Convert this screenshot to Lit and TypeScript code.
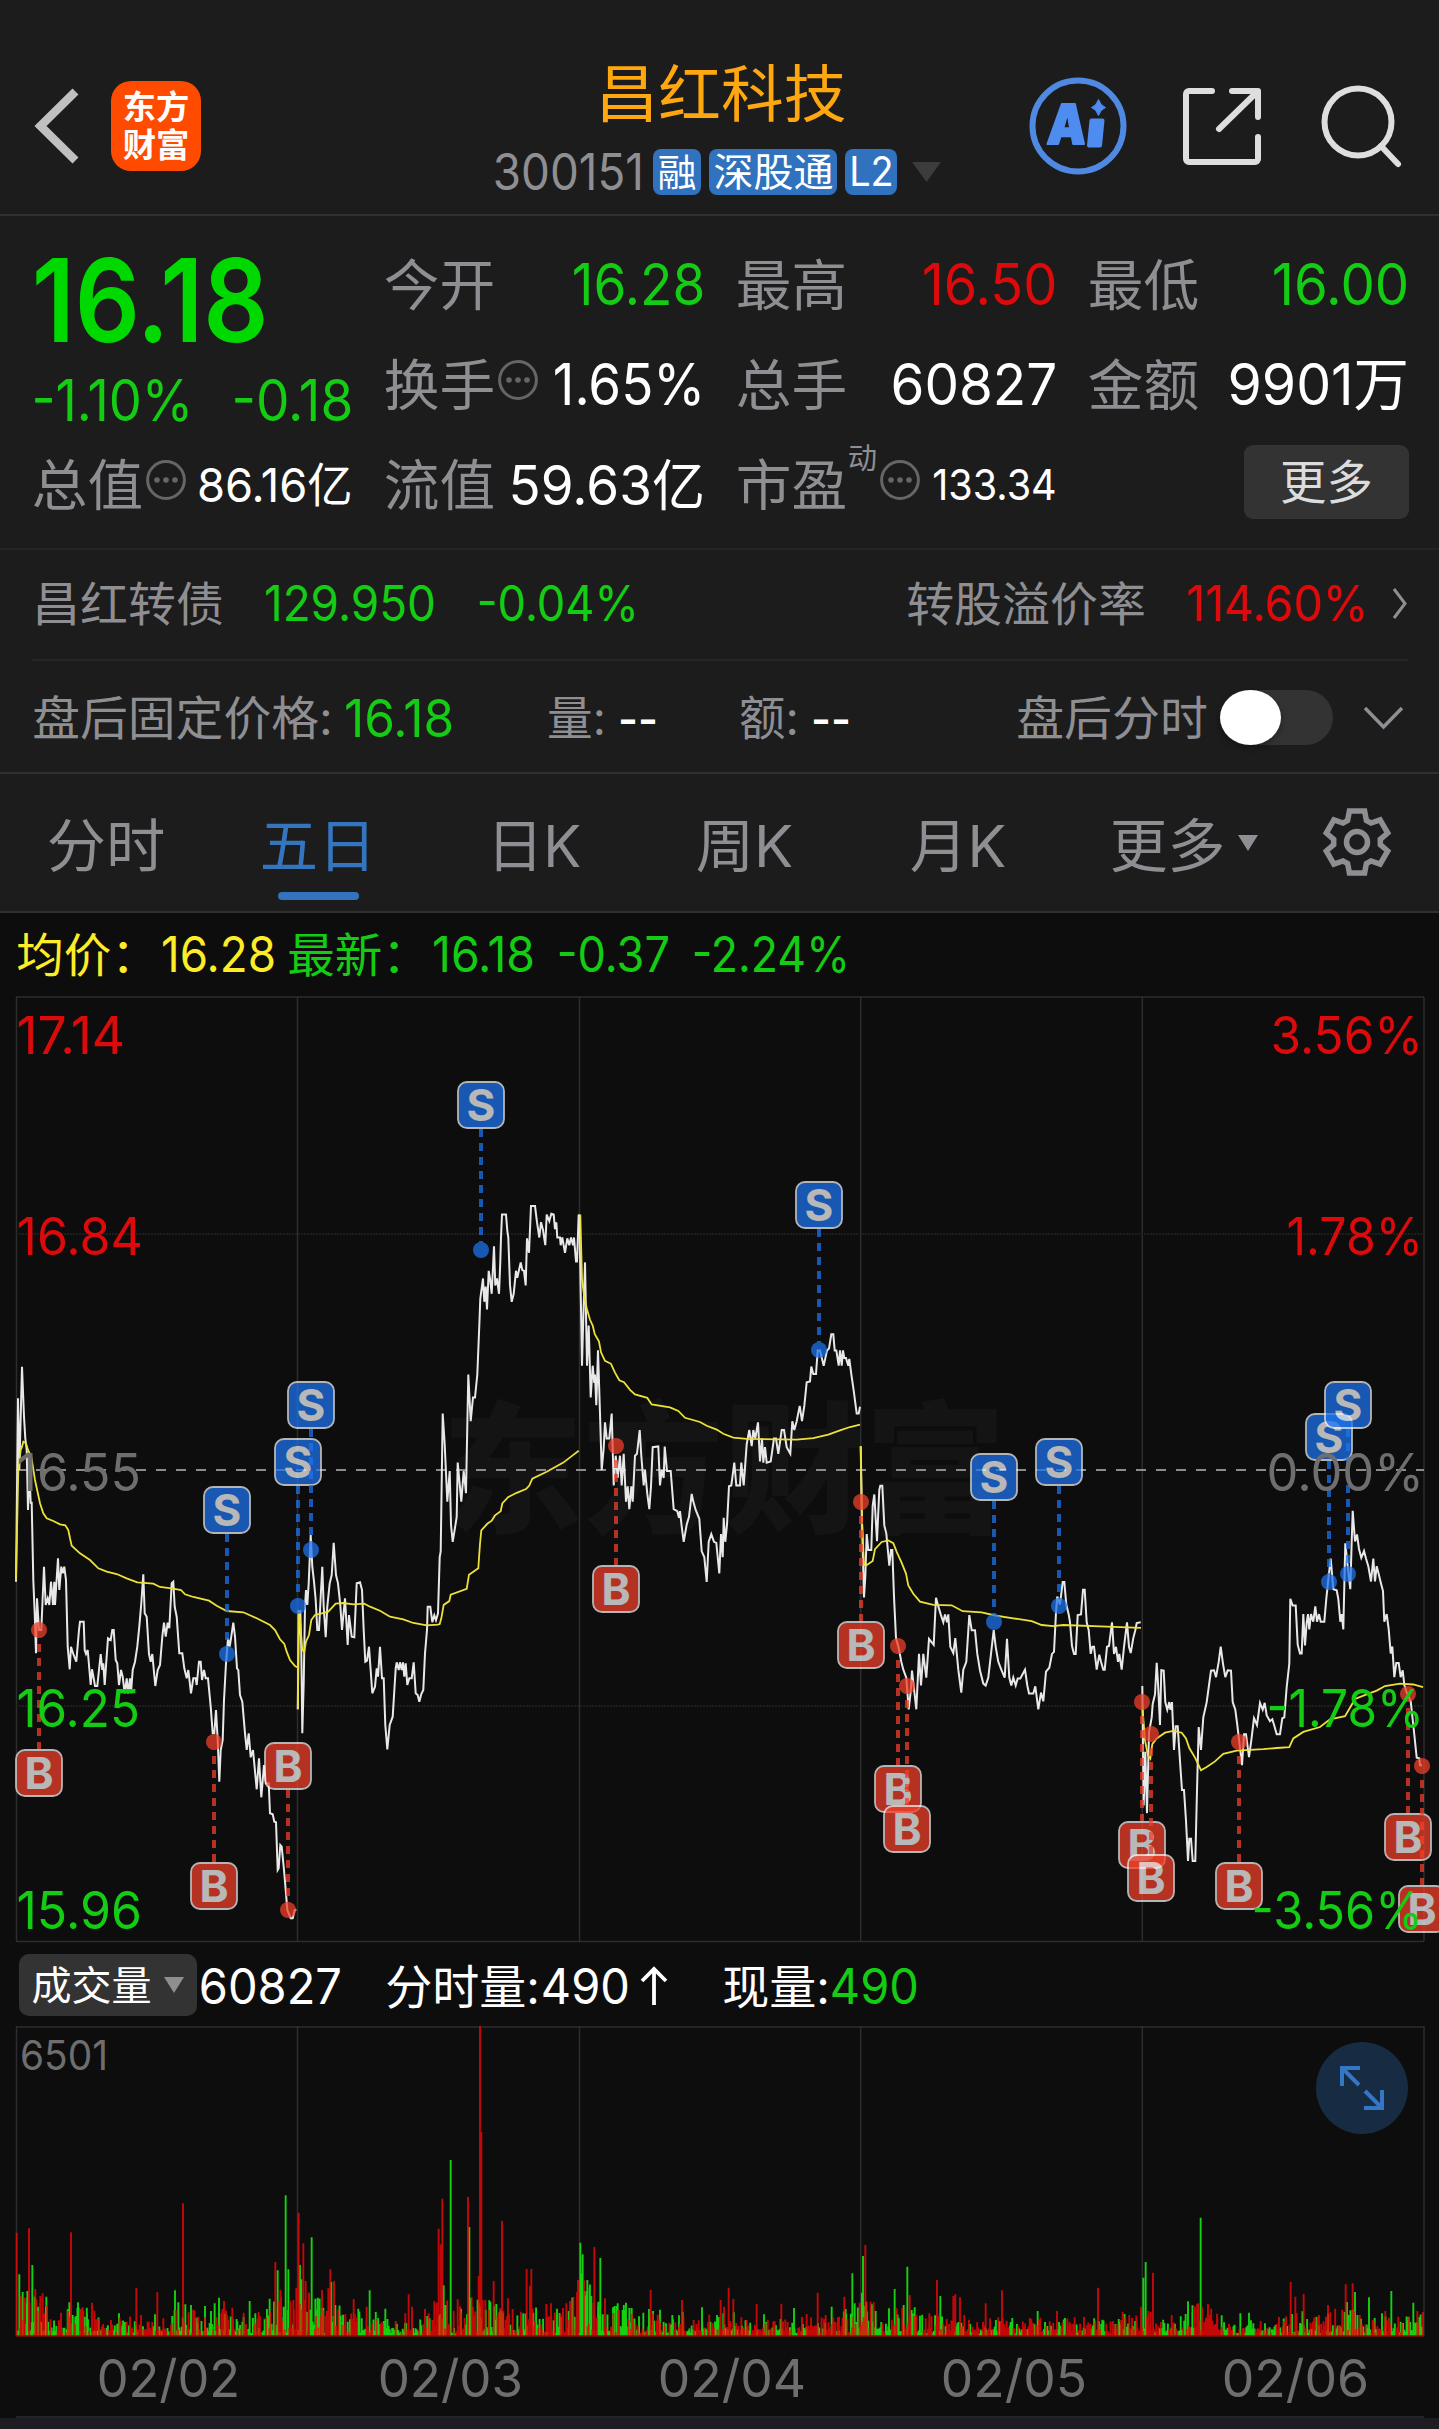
import { LitElement, html, svg, css } from "lit";
import { customElement, property } from "lit/decorators.js";

type Pt = [number, number];

/** Turns "x,y x,y ..." digitised in a local frame into chart coordinates. */
interface Frame { ox: number; oy: number; sx: number; sy: number; }
const A: Frame = { ox: 0, oy: 1450, sx: 3, sy: 3 };
const B: Frame = { ox: 400, oy: 1050, sx: 3, sy: 2.613 };
const C: Frame = { ox: 840, oy: 1300, sx: 3, sy: 2.529 };
const D: Frame = { ox: 1120, oy: 1350, sx: 3, sy: 2.613 };
const TOP = 996;

const trace = (f: Frame, src: string): Pt[] =>
  src.trim().split(/\s+/).map((p) => {
    const [x, y] = p.split(",").map(Number);
    return [f.ox + x / f.sx, f.oy + y / f.sy - TOP] as Pt;
  });
const points = (pts: Pt[]) => pts.map(([x, y]) => `${x.toFixed(1)},${y.toFixed(1)}`).join(" ");

const PRICE: Pt[][] = [
  trace(A, `48,395 54,-155 58,60 66,-250 72,-100 76,-35 80,0 84,180 88,60 92,158 95,158 100,390 104,490 108,610 111,445 117,540 124,540 132,350 137,465 143,445 148,465 153,395 157,440 159,465 163,395 165,465 174,325 178,420 184,350 188,370 193,350 198,390 203,590 209,658 213,590 220,612 229,635 237,540 240,515 251,515 254,600 258,612 263,600 272,705 276,658 282,690 285,708 292,708 302,612 307,660 310,640 314,705 319,635 324,565 332,570 337,540 341,540 347,630 352,640 357,705 363,660 368,680 374,730 380,685 384,730 390,685 393,730 398,660 405,635 412,590 418,530 424,460 430,373 434,490 440,500 447,612 452,635 457,612 466,708 473,660 480,645 487,560 492,518 497,560 503,518 508,535 515,400 520,395 524,470 530,500 538,610 547,610 553,655 560,685 565,660 573,730 580,685 587,685 590,705 597,635 602,635 606,690 612,660 617,685 624,685 632,770 638,850 643,850 648,780 653,870 658,995 662,900 668,870 672,750 678,640 684,565 689,590 693,565 700,518 705,560 711,655 715,660 720,735 727,755 735,850 740,900 746,850 752,922 759,900 770,1018 777,925 784,1042 792,945 798,1000 806,1000 810,1090 818,1093 823,1115 828,1117 833,1260 836,1255 841,1185 845,1190 852,1260 858,1330 862,1380 872,1405 878,1405 884,1380 889,1380`),
  [
    ...trace(A, `893,778 896,560 901,480 904,600 907,850 911,700 915,470 918,420 922,465 926,400 932,255 937,350 942,395 947,450 952,540 957,540 962,440 967,350 971,470 977,562 982,470 989,400 995,375 1001,278 1008,375 1014,400 1021,465 1026,540 1035,445 1043,585 1047,495 1055,560 1063,562 1070,400 1080,397 1086,420 1091,540 1096,635 1101,632 1107,590 1117,730 1125,710 1130,655 1134,680 1140,590 1146,685 1151,685 1156,825 1162,898 1169,825 1178,800 1187,655 1190,637 1196,660 1200,637 1205,660 1209,637 1213,680 1217,640 1222,705 1228,685 1235,685 1241,637 1247,730 1253,735 1258,755 1264,732 1270,720 1275,610 1281,540`),
    ...trace(B, `83,1455 91,1455 97,1495 103,1477 108,1490 114,1472 119,1325 122,1310 128,950 134,1030 142,1180 149,1100 153,1240 158,1285 163,1260 170,1220 173,1078 184,1180 191,1100 198,1158 205,848 212,970 219,908 225,908 232,848 238,720 241,650 249,597 253,658 257,618 261,678 266,577 270,597 275,637 282,513 286,615 291,597 297,637 301,553 303,490 306,430 318,430 322,472 325,490 330,615 335,658 341,637 348,577 352,595 362,555 367,575 372,577 377,615 381,492 387,530 393,408 405,408 411,450 418,490 423,450 429,470 436,510 440,430 448,447 454,428 461,430 465,468 469,450 472,490 480,490 482,510 487,490 495,530 502,492 508,510 513,490 519,510 522,490 528,553 531,553 536,430`),
  ],
  trace(B, `537,430 541,570 546,825 550,700 555,555 561,825 566,720 572,908 578,825 583,870 585,848 589,928 594,785 600,950 605,1098 611,1040 615,973 620,1015 628,1015 635,950 641,1138 647,1060 653,1118 660,1060 665,1138 671,1055 678,1180 683,1140 688,1200 694,1140 698,1180 705,1060 711,1055 719,993 724,1060 731,1138 735,1098 742,1160 748,1200 753,1140 758,1038 775,1036 780,1138 785,1098 791,1118 794,1036 801,1100 812,1100 821,1200 832,1205 837,1222 840,1205 845,1245 851,1285 860,1240 867,1220 875,1160 880,1180 887,1202 898,1225 905,1310 913,1325 920,1390 926,1285 934,1265 942,1285 949,1288 958,1368 963,1265 968,1325 971,1222 976,1285 981,1240 987,1140 994,1138 1003,1078 1009,1138 1020,1138 1024,1078 1031,1138 1040,1030 1048,993 1055,1035 1060,993 1066,1015 1074,973 1080,1075 1086,1015 1090,1078 1095,1038 1100,1078 1112,1075 1122,1015 1128,1015 1135,1055 1145,993 1152,993 1160,1038 1171,1055 1177,970 1183,993 1190,970 1199,930 1206,970 1213,930 1220,868 1230,866 1234,827 1240,847 1248,847 1253,785 1260,785 1271,825 1281,785 1287,780 1294,743 1300,743 1304,785 1309,785 1316,825 1320,785 1325,825 1329,785 1333,805 1338,805 1345,825 1348,807 1354,847 1361,890 1370,950 1376,950 1380,932`),
  trace(C, `62,370 66,560 72,752 76,700 80,592 85,632 94,632 98,520 103,492 111,610 118,480 121,470 127,470 133,570 139,590 148,672 153,632 157,632 162,750 168,855 176,880 184,915 190,935 199,955 206,1035 212,990 216,937 223,990 229,1035 237,895 243,975 250,895 259,955 267,857 281,872 288,753 295,775 302,795 310,815 315,795 321,815 325,795 331,877 340,893 346,855 355,935 364,993 370,935 379,915 388,797 395,835 405,835 412,895 420,937 430,970 437,975 445,955 453,895 461,835 467,877 475,915 484,935 494,955 501,857 508,955 514,975 520,955 527,975 533,957 541,957 555,935 562,975 567,995 580,995 586,977 595,1035 603,993 610,1015 618,940 628,930 636,895 642,890 648,790 652,750 660,770 668,713 673,713 679,770 686,795 690,815 696,875 702,895 707,895 713,797 723,795 729,733 734,733 740,815 746,835 752,895 757,877 762,877 770,935 778,897 783,915 790,935 794,935 801,877 807,875 816,815 822,895 828,877 834,915 838,895 845,935 852,877 861,815 867,877 872,893 880,855 886,835 890,817 902,815`),
  trace(D, `67,878 71,1190 76,1050 81,1210 87,1000 95,960 98,925 105,900 110,817 114,870 120,980 124,837 131,838 136,920 142,940 148,920 151,940 156,920 162,1045 167,983 173,983 180,1075 186,1150 192,1150 198,1230 204,1335 208,1277 213,1277 218,1335 226,1335 231,1150 236,985 243,1045 250,960 260,920 268,870 273,838 282,837 288,855 296,815 302,775 309,820 316,855 323,837 333,838 338,920 346,940 352,980 360,1040 366,1085 372,1004 378,1004 387,1064 394,1020 402,962 411,980 420,922 428,940 434,922 440,955 450,970 457,965 463,982 470,1004 480,1004 487,962 493,960 500,880 508,820 511,650 518,668 527,668 533,770 540,793 545,793 550,690 555,772 560,712 564,690 568,730 573,690 580,710 586,670 591,710 597,690 602,710 613,710 619,650 626,590 632,545 640,625 650,628 655,650 661,710 665,690 670,730 676,505 683,565 691,625 695,500 698,420 705,500 711,482 717,520 724,543 732,525 738,545 745,565 753,605 760,545 765,605 770,565 776,585 783,610 789,630 793,710 800,690 806,730 812,793 817,775 823,855 829,818 836,818 842,855 848,837 853,875 860,895 872,918 880,980 890,1065 898,1067 900,1085 906,1085`),
];

const AVERAGE: Pt[][] = [
  trace(A, `48,390 55,60 62,0 66,-10 70,-25 78,-20 84,0 94,20 105,90 120,160 130,190 140,205 160,213 180,223 196,226 205,240 210,265 215,287 240,310 270,330 295,355 320,365 350,372 380,385 412,397 460,401 480,411 520,416 543,420 555,433 580,441 627,452 650,467 680,483 730,487 770,505 810,525 825,540 840,568 853,582 860,605 870,630 885,648 892,652`),
  [
    ...trace(A, `894,778 895,480 900,510 907,600 913,605 918,575 927,555 934,510 945,495 965,490 985,485 1007,461 1030,459 1060,463 1093,461 1110,470 1140,482 1170,500 1210,508 1240,519 1280,526 1313,524`),
    ...trace(B, `119,1500 124,1485 131,1450 148,1440 152,1423 200,1408 207,1371 235,1354 240,1290 244,1255 262,1238 275,1230 285,1216 302,1205 307,1185 325,1168 350,1157 378,1147 388,1138 397,1120 440,1102 490,1078 520,1058 536,1047`),
  ],
  trace(B, `541,430 546,600 552,640 560,675 570,705 578,720 584,742 597,762 603,790 615,812 633,820 645,843 658,863 672,868 690,888 705,900 742,909 755,926 810,934 835,943 855,961 900,972 920,982 950,992 970,1003 1000,1013 1040,1016 1190,1018 1240,1014 1285,1005 1320,994 1350,985 1380,979`),
  trace(C, `62,370 66,560 72,670 77,672 98,660 105,630 125,612 145,608 160,615 170,637 185,665 198,692 205,722 220,743 240,763 280,771 335,772 368,787 425,790 465,798 520,805 575,812 605,822 640,825 670,822 800,826 903,829`),
  trace(D, `67,930 75,1020 84,1060 91,1068 97,1030 110,1015 135,1000 160,995 185,1000 198,1015 208,1040 225,1065 243,1098 260,1090 285,1075 310,1055 350,1047 430,1043 470,1040 508,1038 520,1015 550,998 600,985 630,965 675,957 690,935 705,912 740,900 770,890 795,878 840,872 880,874 909,881`),
];

/** Trades: side, x, badge centre y, price point y. */
const TRADES: ["B" | "S", number, number, number][] = [
  ["B", 39, 1773, 1630], ["B", 214, 1886, 1742], ["S", 227, 1510, 1654], ["B", 288, 1766, 1910],
  ["S", 298, 1462, 1606], ["S", 311, 1405, 1550], ["S", 481, 1105, 1250], ["B", 616, 1589, 1446],
  ["S", 819, 1205, 1350], ["B", 861, 1645, 1502], ["B", 898, 1789, 1646], ["B", 907, 1829, 1686],
  ["S", 994, 1477, 1622], ["S", 1059, 1462, 1606], ["B", 1142, 1845, 1702], ["B", 1151, 1878, 1734],
  ["B", 1239, 1886, 1742], ["S", 1329, 1437, 1582], ["S", 1348, 1405, 1574], ["B", 1408, 1837, 1694],
  ["B", 1422, 1909, 1766],
];

/** Volume peaks: x and top in third-pixels from the strip's origin, r = up, g = down. */
const PEAKS: [number, string][] = [
  [0, `50,908,r 58,1033,g 62,1098,r 68,1086,g 80,1120,g 82,1083,g 87,895,r 97,1005,g 104,1100,g 109,1108,r 114,1130,g 121,1098,r 128,1090,r 133,1150,r 139,1100,g 203,1138,g 208,1117,g 213,907,r 226,1160,g 234,1117,g 240,1148,r 248,1132,r 254,1160,g 261,1150,g 276,1118,r 283,1142,r 297,1167,r 333,1170,r 357,1150,g 375,1176,g 409,1073,r 423,1155,r 465,1153,g 472,1087,r 490,1165,r 515,1180,r 525,1081,g 535,1117,g 549,820,r 556,1123,g 573,1125,g 595,1160,r 615,1128,g 633,1143,g 644,1120,g 657,1103,g 672,1113,r 679,1156,r 697,1133,r 712,1174,g 731,1148,r 749,1113,g 766,1150,g 776,1146,r 798,1162,r 809,1106,g 822,1143,g 826,996,r 833,1021,g 841,1080,r 851,1130,g 857,796,g 865,1018,g 880,1110,r 889,1073,r 896,848,r 900,1005,g 904,1048,g 910,940,r 917,1053,r 927,1088,r 935,922,g 946,1106,g 953,1103,g 966,1080,r 970,1133,g 985,1075,r 991,1018,r 994,1056,g 1002,1053,r 1006,1125,g 1026,1178,g 1036,1153,r 1061,1107,r 1075,1136,g 1100,1130,r 1109,1081,g 1130,1167,r 1156,1136,g 1216,1150,r 1226,1093,r 1236,1130,r 1275,1137,r 1286,1150,r 1297,1170,r 1316,896,r 1323,943,r 1327,806,r 1331,1066,g 1337,1125,g 1352,690,g 1361,1143,r 1373,1108,r 1383,1136,g 1404,801,r 1408,891,g 1415,1102,r 1436,1038,r 1440,288,r 1444,606,r 1448,1110,r`],
  [1440, `16,1110,r 27,1140,r 41,1053,r 60,1135,r 66,873,r 69,1148,g 84,1105,r 98,1137,r 123,1156,r 140,1017,r 150,1067,r 154,1017,r 160,1148,g 199,1122,r 213,1120,r 231,1136,g 242,1153,r 259,1120,r 266,1143,g 280,1101,r 294,1050,r 301,938,g 305,1030,g 308,973,g 312,1050,r 318,1110,g 322,1050,g 329,1075,g 334,1098,g 343,951,r 355,1115,g 361,984,g 375,1105,r 399,1132,g 404,1128,g 413,1120,g 417,1140,r 433,1140,g 438,1118,g 448,1134,g 455,1134,g 490,1148,g 507,1137,g 512,1080,r 519,1152,r 540,1139,g 577,1155,g 597,1156,g 606,1110,r 608,1145,g 641,1170,r 666,1132,g 711,1155,g 722,1110,r 732,1130,r 746,1073,r 760,1107,r 784,1162,r 800,1170,r 830,1122,r 852,1153,g 858,1176,g 880,1174,r 904,1121,r 942,1134,g 966,1160,r 980,1152,r 1013,1088,r 1037,1155,r 1055,1130,g 1077,1160,r 1093,1100,r 1097,1137,g 1117,1030,g 1124,1120,g 1139,1118,r 1146,1088,g 1149,978,g 1156,945,r 1160,1115,r 1181,1117,r 1187,1143,g 1227,1135,g 1244,1077,g 1250,1135,r 1271,1125,g 1282,1010,g 1289,1095,r 1304,1132,g 1320,1157,g 1348,1150,r 1371,1050,r`],
  [2820, `1,1098,g 40,1098,r 46,1093,r 60,1102,r 64,1178,g 137,1120,r 186,1081,r 200,1172,r 212,1176,g 274,1167,r 293,1143,g 297,1170,r 351,1143,r 368,1178,r 404,1162,r 432,1161,r 474,1073,r 499,1181,r 526,1182,g 537,1176,g 548,1145,r 556,1160,r 576,1164,r 590,1165,r 603,1130,r 610,1043,g 617,996,g 625,1143,r 632,1145,r 639,1028,r 663,1176,r 695,1155,r 737,1152,g 744,1114,g 757,1147,g 775,1120,r 782,863,g 786,1130,r 798,1163,r 804,1122,r 832,1165,r 845,1156,g 867,1181,r 901,1150,g 927,1148,g 962,1173,r 975,1180,g 1017,1161,r 1032,1173,r 1052,1056,r 1056,1152,g 1066,1100,r 1091,1092,r 1129,1176,g 1137,1155,r 1158,1160,r 1164,1125,r 1171,1147,r 1200,1187,g 1217,1063,r 1221,1116,g 1225,1155,g 1238,1060,r 1245,1086,g 1287,1102,g 1304,1164,g 1326,1150,g 1336,1143,r 1354,1083,g 1382,1175,g 1406,1160,g 1420,1118,g 1432,1143,r 1449,1146,r`],
];

interface Bar { x: number; h: number; up: boolean; }

const buildVolume = (): Bar[] => {
  const peaks: Bar[] = [];
  for (const [off, src] of PEAKS)
    for (const p of src.split(" ")) {
      const [x, y, c] = p.split(",");
      peaks.push({ x: (off + Number(x)) / 3, h: (1218 - Number(y)) / 3, up: c === "r" });
    }
  let seed = 20240206;
  const rnd = () => ((seed = (seed * 1103515245 + 12345) % 2147483648) / 2147483648);
  const bars: Bar[] = [];
  let up = true;
  for (let x = 16.6; x < 1423; x += 1.17) {
    // Quiet minutes follow the level of the trading around them.
    const near = peaks.reduce((s, p) => s + (Math.abs(p.x - x) < 12 ? Math.min(p.h, 40) : 0), 0);
    if (rnd() < 0.4) up = !up;
    const red = x > 1194 && x < 1222 ? true : up;
    const r = rnd();
    bars.push({ x, h: 2.5 + r * r * (8 + near * 0.095) + rnd() * 4, up: red });
  }
  return [...bars, ...peaks];
};
const VOLUME = buildVolume();
const bars = (up: boolean) =>
  VOLUME.filter((b) => b.up === up).map((b) => `M${b.x.toFixed(2)} 310V${(310 - b.h).toFixed(1)}`).join("");

/** Real text set to a given ink width, optically centred on its box. */
const fit = (text: string, width: number, size: number, cls: string, left: number, right: number) => html`
  <svg class="tx ${cls}" width=${width} height=${size} viewBox="0 0 ${width} ${size}">
    <text x=${-left * size} y=${size * 0.865} font-size=${size}
      textLength=${width + (left + right) * size} lengthAdjust="spacingAndGlyphs">${text}</text>
  </svg>`;
const label = (text: string, width: number, size: number, cls = "") =>
  fit(text, width, size, cls, text[0] === "1" ? 0.02 : 0.045, /[亿万]$/.test(text) ? 0.035 : 0.04);
const cjk = (text: string, width: number, size: number, cls = "grey") => fit(text, width, size, cls, 0.04, 0.04);

const more = html`<svg class="info" width="40" height="40" viewBox="0 0 40 40">
  <circle cx="20" cy="20" r="18.4" fill="none" stroke="#666" stroke-width="3" />
  <g fill="#666"><circle cx="11" cy="20" r="2.8" /><circle cx="20" cy="20" r="2.8" /><circle cx="29" cy="20" r="2.8" /></g>
</svg>`;

const shared = css`
  :host {
    display: block;
    font-family: Inter, "Noto Sans CJK SC", sans-serif;
  }
  svg { display: block; flex: none; overflow: visible; }
  .tx text, text { font-family: Inter, "Noto Sans CJK SC", sans-serif; }
  .grey { fill: #8e8e93; }
  .green { fill: #14cc14; }
  .red { fill: #dc0a0a; }
  .white { fill: #fff; }
  .yellow { fill: #fdec28; }
  .blue { fill: #3574bf; }
  .medium { font-weight: 440; }
`;

@customElement("stock-header")
class StockHeader extends LitElement {
  static styles = [shared, css`
    .bar { box-sizing: border-box; height: 216px; padding: 37px 0 0 34px; border-bottom: 2px solid #303030; display: flex; align-items: center; background: #1c1c1c; }
    .logo { width: 90px; height: 90px; margin-left: 32px; border-radius: 20px; background: #ff4b00; display: flex; flex-direction: column; align-items: center; justify-content: center; gap: 5px; }
    .logo svg { fill: #fff; font-weight: 700; }
    .title { width: 446px; margin: 3px 0 0 294px; display: flex; flex-direction: column; gap: 25px; }
    .name { padding: 5px 0 0 103px; height: 59px; display: flex; align-items: center; }
    .name svg { fill: #ffa70f; }
    .sub { display: flex; align-items: center; height: 46px; }
    .badge { height: 46px; border-radius: 8px; background: #3072be; display: flex; align-items: center; justify-content: center; margin-left: 8px; }
    .badge svg { fill: #fff; }
    .b1 { width: 48px; margin-left: 11px; }
    .b3 { width: 128px; }
    .b2 { width: 52px; }
    .caret { margin-left: 15px; }
    .ai { margin-left: 88px; }
    .share { margin-left: 55px; }
    .search { margin-left: 58px; }
    .glyph { font-weight: 900; }
  `];
  render() {
    return html`<header class="bar">
      <svg width="45" height="76" viewBox="0 0 45 76"><path d="M41.500 3.500 6.500 38l35 34.500" fill="none" stroke="#c0c0c0" stroke-width="8.500" /></svg>
      <div class="logo">${cjk("东方", 64, 33, "")}${cjk("财富", 64, 33, "")}</div>
      <div class="title">
        <div class="name">${cjk("昌红科技", 246, 62, "")}</div>
        <div class="sub">
          ${label("300151", 147, 50, "grey")}
          <span class="badge b1">${cjk("融", 36, 38, "")}</span>
          <span class="badge b3">${cjk("深股通", 117, 39, "")}</span>
          <span class="badge b2">${label("L2", 41, 41)}</span>
          <svg class="caret" width="29" height="20" viewBox="0 0 29 20"><path d="M0 0h29L14.5 20z" fill="#3c3c3c" /></svg>
        </div>
      </div>
      <svg class="ai" width="98" height="98" viewBox="0 0 98 98">
        <circle cx="49" cy="49" r="45.5" fill="none" stroke="#5089e2" stroke-width="6" />
        <g fill="#4f8cf0" stroke="#4f8cf0" stroke-width="2" stroke-linejoin="round">
          <text class="glyph" x="17" y="67" font-size="55" textLength="39" lengthAdjust="spacingAndGlyphs" transform="skewX(-4) translate(5 0)">A</text>
          <path d="M62.5 43.5h11l-2.5 25H60z" stroke-width="4" />
          <path d="M69.500 22.500q2 6 7 8q-5 2-7 8q-2-6-7-8q5-2 7-8z" stroke-width="1" />
        </g>
      </svg>
      <svg class="share" width="80" height="80" viewBox="0 0 80 80" fill="none" stroke="#dedede" stroke-width="6" stroke-linecap="round" stroke-linejoin="round">
        <path d="M30 5H7a3 3 0 0 0-3 3v65a3 3 0 0 0 3 3h66a3 3 0 0 0 3-3V51" />
        <path d="M50 5h26v26M75 6 37 43" />
      </svg>
      <svg class="search" width="80" height="80" viewBox="0 0 80 80" fill="none" stroke="#dedede" stroke-width="6">
        <circle cx="38" cy="36" r="33.500" /><path d="m61 60 17 18" stroke-linecap="round" />
      </svg>
    </header>`;
  }
}

@customElement("quote-panel")
class QuotePanel extends LitElement {
  static styles = [shared, css`
    .quote { box-sizing: border-box; height: 334px; padding: 18px 0 0 34px; display: grid; grid-template-columns: repeat(4, 317px); column-gap: 35px; background: #1c1c1c; border-bottom: 2px solid #252525; }
    .col { display: flex; flex-direction: column; }
    .cell { height: 100px; display: flex; align-items: center; }
    .cell > :last-child { margin-left: auto; }
    .price { height: 133px; display: flex; align-items: center; }
    .price svg { fill: #00d900; font-weight: 560; }
    .change { height: 67px; display: flex; align-items: center; justify-content: space-between; }
    .info { margin: 0 0 9px 5px; }
    .dyn { align-self: flex-start; margin: 10px 0 0 4px; }
    .dyn + .info { margin-left: 4px; }
    .cell > .btn { width: 165px; height: 74px; border-radius: 9px; background: #333; display: flex; align-items: center; justify-content: center; margin: -5px -2px 0 auto; }
    .btn svg { fill: #dcdcdc; }
  `];
  render() {
    return html`<section class="quote">
      <div class="col">
        <div class="price">${label("16.18", 230, 115)}</div>
        <div class="change">${label("-1.10%", 157, 57, "green")}${label("-0.18", 117, 57, "green")}</div>
        <div class="cell">${cjk("总值", 107, 55)}${more}${label("86.16亿", 152, 47, "white medium")}</div>
      </div>
      <div class="col">
        <div class="cell">${cjk("今开", 107, 55)}${label("16.28", 130, 57, "green")}</div>
        <div class="cell">${cjk("换手", 107, 55)}${more}${label("1.65%", 149, 57, "white medium")}</div>
        <div class="cell">${cjk("流值", 107, 55)}${label("59.63亿", 192, 55, "white medium")}</div>
      </div>
      <div class="col">
        <div class="cell">${cjk("最高", 107, 55)}${label("16.50", 132, 57, "red")}</div>
        <div class="cell">${cjk("总手", 107, 55)}${label("60827", 162, 57, "white medium")}</div>
        <div class="cell">${cjk("市盈", 107, 55)}<span class="dyn">${cjk("动", 27, 29)}</span>${more}${label("133.34", 122, 43, "white medium")}</div>
      </div>
      <div class="col">
        <div class="cell">${cjk("最低", 107, 55)}${label("16.00", 134, 57, "green")}</div>
        <div class="cell">${cjk("金额", 107, 55)}${label("9901万", 177, 57, "white medium")}</div>
        <div class="cell"><span class="btn">${cjk("更多", 89, 47, "")}</span></div>
      </div>
    </section>`;
  }
}

@customElement("detail-rows")
class DetailRows extends LitElement {
  static styles = [shared, css`
    .wrap { background: #1c1c1c; border-bottom: 2px solid #303030; }
    .row { box-sizing: border-box; display: flex; align-items: center; }
    .bond { height: 111px; margin: 0 31px 0 32px; padding: 0 1px 2px 2px; border-bottom: 2px solid #262626; }
    .after { height: 111px; padding: 2px 36px 0 34px; }
    .push { margin-left: auto; }
    .g1 { margin-left: 43px; } .g2 { margin-left: 45px; } .g3 { margin-left: 27px; }
    .g4 { margin-left: 14px; } .g5 { margin-left: 97px; } .g6 { margin-left: 16px; }
    .g7 { margin-left: 86px; } .g8 { margin-left: 14px; } .g9 { margin-left: 31px; }
    .dash { margin-top: 10px; }
    .toggle { width: 113px; height: 55px; border-radius: 28px; background: #333; display: flex; }
    .knob { width: 61px; height: 55px; border-radius: 50%; background: #fff; box-shadow: 0 3px 6px #0005; }
  `];
  render() {
    const dashes = html`<svg class="g6 dash" width="35" height="5" viewBox="0 0 35 5"><text class="white" x="-2" y="17" font-size="49" font-weight="500" textLength="40" lengthAdjust="spacingAndGlyphs">--</text></svg>`;
    return html`<section class="wrap">
      <div class="row bond">
        ${cjk("昌红转债", 188, 47)}<span class="g1">${label("129.950", 169, 49, "green")}</span>
        <span class="g2">${label("-0.04%", 158, 49, "green")}</span>
        <span class="push">${cjk("转股溢价率", 236, 47)}</span>
        <span class="g1">${label("114.60%", 179, 49, "red")}</span>
        <svg class="g3" width="14" height="31" viewBox="0 0 14 31"><path d="m1 1 11 14.500L1 30" fill="none" stroke="#8e8e93" stroke-width="3" /></svg>
      </div>
      <div class="row after">
        ${cjk("盘后固定价格:", 297, 47)}<span class="g4">${label("16.18", 107, 52, "green")}</span>
        <span class="g5">${cjk("量:", 55, 47)}</span>${dashes}
        <span class="g7">${cjk("额:", 56, 47)}</span>${dashes}
        <span class="push">${cjk("盘后分时", 188, 47)}</span>
        <span class="toggle g8"><i class="knob"></i></span>
        <svg class="g9" width="39" height="22" viewBox="0 0 39 22"><path d="m1 1 18.500 19L38 1" fill="none" stroke="#8e8e93" stroke-width="3.500" /></svg>
      </div>
    </section>`;
  }
}

@customElement("period-tabs")
class PeriodTabs extends LitElement {
  static styles = [shared, css`
    .tabs { box-sizing: border-box; height: 139px; padding: 7px 0 0 49px; display: flex; align-items: center; background: #1c1c1c; border-bottom: 2px solid #303030; }
    .tab { position: relative; }
    .t2 { margin-left: 99px; } .t3 { margin-left: 115px; } .t4 { margin-left: 119px; }
    .t5 { margin-left: 121px; } .t6 { margin-left: 108px; }
    .on::after { content: ""; position: absolute; left: 16px; top: 75px; width: 81px; height: 8px; border-radius: 4px; background: #3373bd; }
    .caret { margin: 0 0 7px 15px; }
    .gear { margin: 0 0 8px 64px; }
  `];
  private gear() {
    const pts: string[] = [];
    for (let i = 0; i < 6; i++) {
      const c = (i * 60 - 90) * Math.PI / 180;
      for (const [da, r] of [[-0.41, 23.5], [-0.24, 32], [0.24, 32], [0.41, 23.5]])
        pts.push(`${(35 + r * Math.cos(c + da)).toFixed(1)},${(35 + r * Math.sin(c + da)).toFixed(1)}`);
    }
    return pts.join(" ");
  }
  render() {
    return html`<nav class="tabs">
      <span class="tab">${cjk("分时", 114, 58)}</span>
      <span class="tab on t2">${cjk("五日", 112, 58, "blue")}</span>
      <span class="tab t3">${cjk("日K", 90, 58)}</span>
      <span class="tab t4">${cjk("周K", 93, 58)}</span>
      <span class="tab t5">${cjk("月K", 92, 58)}</span>
      <span class="tab t6">${cjk("更多", 111, 58)}</span>
      <svg class="caret" width="20" height="16" viewBox="0 0 20 16"><path d="M0 0h20L10 16z" fill="#8e8e93" /></svg>
      <svg class="gear" width="70" height="70" viewBox="0 0 70 70" fill="none" stroke="#8e8e93" stroke-width="5.500">
        <polygon points=${this.gear()} /><circle cx="35" cy="35" r="10.500" />
      </svg>
    </nav>`;
  }
}

@customElement("price-chart")
class PriceChart extends LitElement {
  static styles = [shared, css`
    .legend { box-sizing: border-box; height: 83px; padding: 0 0 0 18px; display: flex; align-items: center; background: #0d0d0d; }
    .canvas { background: #0d0d0d; }
    .l0 { margin-left: 5px; } .l1 { margin-left: 15px; } .l3 { margin-left: 26px; }
    .mark { font-weight: 900; fill: #141414; }
    .trade { opacity: 0.74; }
    .side { font-weight: 700; fill: #f4f4f4; }
    .axis { font-weight: 400; }
    .dim { fill: #6e6e6e; }
  `];
  private axis(text: string, x: number, w: number, base: number, cls: string) {
    return svg`<text class="axis ${cls}" x=${x - 1.5} y=${base - TOP} font-size="52" textLength=${w + 4.5} lengthAdjust="spacingAndGlyphs">${text}</text>`;
  }
  private trade([side, x, cy, py]: ["B" | "S", number, number, number]) {
    const c = side === "B" ? "#f0402a" : "#1d73ee";
    const y = cy - TOP, p = py - TOP;
    const from = p > y ? y + 24 : y - 24;
    return svg`<g class="trade">
      <line x1=${x} x2=${x} y1=${side === "B" && p < y ? p : from} y2=${side === "B" && p < y ? from : p} stroke=${c} stroke-width="4" stroke-dasharray="8 6" />
      <circle cx=${x} cy=${p} r="8" fill=${c} />
      <rect x=${x - 23} y=${y - 23} width="46" height="46" rx="9" fill=${c} stroke="#f0f0f0" stroke-width="1.800" />
      <text class="side" x=${x} y=${y + 16} font-size="44" text-anchor="middle">${side}</text>
    </g>`;
  }
  render() {
    return html`
      <div class="legend">
        ${cjk("均价：", 139, 47, "yellow")}<span class="l0">${label("16.28", 112, 49, "yellow")}</span>
        <span class="l1">${cjk("最新：", 139, 47, "green")}</span><span class="l0">${label("16.18", 100, 49, "green")}</span>
        <span class="l3">${label("-0.37", 109, 49, "green")}</span>
        <span class="l3">${label("-2.24%", 154, 49, "green")}</span>
      </div>
      <svg class="canvas" width="1439" height="947" viewBox="0 0 1439 947">
        <text class="mark" x="442" y="526" font-size="142" textLength="564" lengthAdjust="spacingAndGlyphs">东方财富</text>
        <g stroke="#2d2d2d" stroke-width="1.500" fill="none">
          <path d="M16 1H1424M16 945.500H1424M16.500 1V945M297.500 1V945M579.500 1V945M860.700 1V945M1142.300 1V945M1424 1V945" />
          <path d="M16 238H1424M16 710H1424" stroke="#242424" stroke-dasharray="2 1" />
        </g>
        <path d="M16 474H1424" stroke="#8c8c8c" stroke-width="2" stroke-dasharray="10 10" />
        ${PRICE.map((d) => svg`<polyline points=${points(d)} fill="none" stroke="#e8e8e8" stroke-width="2" />`)}
        ${AVERAGE.map((d) => svg`<polyline points=${points(d)} fill="none" stroke="#ece13a" stroke-width="1.800" />`)}
        ${TRADES.map((t) => this.trade(t))}
        ${this.axis("17.14", 18, 104, 1054, "red")}
        ${this.axis("16.84", 18, 122, 1255, "red")}
        ${this.axis("16.55", 18, 120, 1491, "dim")}
        ${this.axis("16.25", 18, 119, 1727, "green")}
        ${this.axis("15.96", 18, 121, 1929, "green")}
        ${this.axis("3.56%", 1272, 148, 1054, "red")}
        ${this.axis("1.78%", 1288, 132, 1255, "red")}
        ${this.axis("0.00%", 1268, 153, 1491, "dim")}
        ${this.axis("-1.78%", 1268, 153, 1727, "green")}
        ${this.axis("-3.56%", 1253, 167, 1929, "green")}
      </svg>`;
  }
}

@customElement("volume-chart")
class VolumeChart extends LitElement {
  @property({ type: Array }) dates: [string, number][] = [];
  static styles = [shared, css`
    :host { background: #0d0d0d; }
    .head { box-sizing: border-box; height: 83px; padding: 3px 0 0 19px; display: flex; align-items: center; }
    .pick { width: 164px; padding-left: 14px; height: 62px; border-radius: 10px; background: #333; display: flex; align-items: center; gap: 14px; margin-top: -2px; }
    .v1 { margin-left: 4px; } .v2 { margin-left: 47px; } .v3 { margin-left: 5px; }
    .v4 { margin-left: 13px; } .v5 { margin-left: 57px; } .v6 { margin-left: 4px; }
    .dates { box-sizing: border-box; height: 79px; padding: 0 15px 0 16px; display: grid; grid-template-columns: repeat(5, 1fr); align-items: center; justify-items: center; }
    .dates .tx { fill: #6e6e6e; margin: 3px 0 0 24px; }
    .rule { height: 2px; margin: 0 15px 0 16px; background: #252527; }
    .foot { height: 11px; background: #1d1c22; }
    .dim { fill: #6e6e6e; }
  `];
  render() {
    return html`
      <div class="head">
        <span class="pick">${cjk("成交量", 117, 40, "white")}<svg width="20" height="16" viewBox="0 0 20 16"><path d="M0 0h20L10 16z" fill="#8e8e93" /></svg></span>
        <span class="v1">${label("60827", 139, 49, "white")}</span>
        <span class="v2">${cjk("分时量:", 151, 47, "white")}</span>
        <span class="v3">${label("490", 85, 49, "white")}</span>
        <svg class="v4" width="26" height="40" viewBox="0 0 26 40"><path d="M13 39V3M1 15 13 3l12 12" fill="none" stroke="#fff" stroke-width="3.800" /></svg>
        <span class="v5">${cjk("现量:", 104, 47, "white")}</span>
        <span class="v6">${label("490", 85, 49, "green")}</span>
      </div>
      <svg width="1439" height="311" viewBox="0 0 1439 311">
        <path d="M16 1H1424M16.500 0V310M297.500 0V310M579.500 0V310M860.700 0V310M1142.300 0V310M1424 0V310" stroke="#2d2d2d" stroke-width="1.500" fill="none" />
        <text class="dim" x="20" y="44" font-size="40.500" textLength="88" lengthAdjust="spacingAndGlyphs">6501</text>
        <path d=${bars(false)} stroke="#16dc12" stroke-width="1.900" opacity="0.95" />
        <path d=${bars(true)} stroke="#f20808" stroke-width="1.900" opacity="0.8" />
        <path d="M16 310H1424" stroke="#8a1200" stroke-width="1.500" />
        <circle cx="1362" cy="62" r="46" fill="#172b42" />
        <path d="M1342 60V42h18M1342 42l17 17M1382 64v18h-18M1382 82l-17-17" fill="none" stroke="#3577c4" stroke-width="4" />
      </svg>
      <div class="dates">${this.dates.map(([d, w]) => label(d, w, 52))}</div>
      <div class="rule"></div>
      <div class="foot"></div>`;
  }
}

@customElement("app-root")
class AppRoot extends LitElement {
  static styles = css`
    :host { display: block; width: 1439px; height: 2429px; overflow: hidden; background: #0d0d0d; }
  `;
  render() {
    return html`
      <stock-header></stock-header>
      <quote-panel></quote-panel>
      <detail-rows></detail-rows>
      <period-tabs></period-tabs>
      <price-chart></price-chart>
      <volume-chart .dates=${[["02/02", 139], ["02/03", 141], ["02/04", 144], ["02/05", 142], ["02/06", 143]]}></volume-chart>`;
  }
}
